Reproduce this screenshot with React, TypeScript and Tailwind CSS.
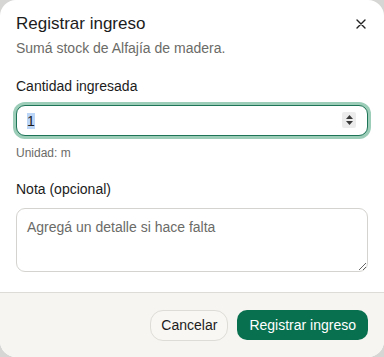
import { useEffect, useRef } from "react"

export default function App() {
  const qtyRef = useRef<HTMLInputElement>(null)

  useEffect(() => {
    const el = qtyRef.current
    if (el) {
      el.focus()
      el.select()
    }
  }, [])

  return (
    <div className="h-[357px] w-[384px] overflow-hidden bg-[#d6d6d4] font-['Liberation_Sans',Arial,sans-serif]">
      <div className="flex h-full flex-col overflow-hidden rounded-[16px] bg-white">
        <div className="flex-1 px-4 pt-[13px]">
          <div className="flex items-start justify-between">
            <h2 className="text-[17px] leading-[22px] text-[#1c1c1c]">Registrar ingreso</h2>
            <button className="mr-[1px] mt-[5px] text-[#222]" aria-label="Cerrar">
              <svg width="12" height="12" viewBox="0 0 12 12" fill="none" stroke="currentColor" strokeWidth="1.4" strokeLinecap="round">
                <path d="M2 2l8 8M10 2l-8 8" />
              </svg>
            </button>
          </div>
          <p className="mt-[4px] text-[14px] leading-[18px] text-[#6b6b68]">Sumá stock de Alfajía de madera.</p>

          <label className="mt-[20px] block text-[14px] font-medium leading-[18px] text-[#1c1c1c]">
            Cantidad ingresada
          </label>
          <div className="relative mt-[10px]">
            <input
              ref={qtyRef}
              type="number"
              defaultValue={1}
              className="block h-[31px] w-full rounded-[9px] border border-[#1d7457] bg-white px-[10px] text-[14px] text-[#1c1c1c] outline-none ring-[3px] ring-[#9bcdb9] selection:bg-[#bcd6f8] [appearance:textfield] [&::-webkit-inner-spin-button]:appearance-none [&::-webkit-outer-spin-button]:appearance-none"
            />
            <div className="pointer-events-none absolute right-[12px] top-[7px] flex h-[16px] w-[14px] flex-col items-center justify-center gap-[2px] rounded-[2px] bg-[#ececec]">
              <svg width="7" height="4" viewBox="0 0 7 4" fill="#3a3a3a">
                <path d="M3.5 0L7 4H0z" />
              </svg>
              <svg width="7" height="4" viewBox="0 0 7 4" fill="#3a3a3a">
                <path d="M0 0h7L3.5 4z" />
              </svg>
            </div>
          </div>
          <p className="mt-[9px] text-[12px] leading-[16px] text-[#6b6b68]">Unidad: m</p>

          <label className="mt-[19px] block text-[14px] font-medium leading-[18px] text-[#1c1c1c]">
            Nota (opcional)
          </label>
          <textarea
            placeholder="Agregá un detalle si hace falta"
            className="mt-[10px] block h-[64px] w-full resize-y rounded-[9px] border border-[#d4d3cf] px-[10px] pt-[9px] text-[14px] leading-[18px] text-[#1c1c1c] outline-none placeholder:text-[#6b6b68]"
          />
        </div>

        <div className="flex h-[65px] items-center justify-end gap-[9px] border-t border-[#dddcd6] bg-[#f6f5f1] px-4">
          <button className="h-[31px] rounded-[13px] border border-[#dddcd6] bg-[#f8f7f3] px-[10px] text-[14px] text-[#1c1c1c]">
            Cancelar
          </button>
          <button className="h-[30px] rounded-[10px] bg-[#09704f] px-[12px] text-[14px] text-white">
            Registrar ingreso
          </button>
        </div>
      </div>
    </div>
  )
}
